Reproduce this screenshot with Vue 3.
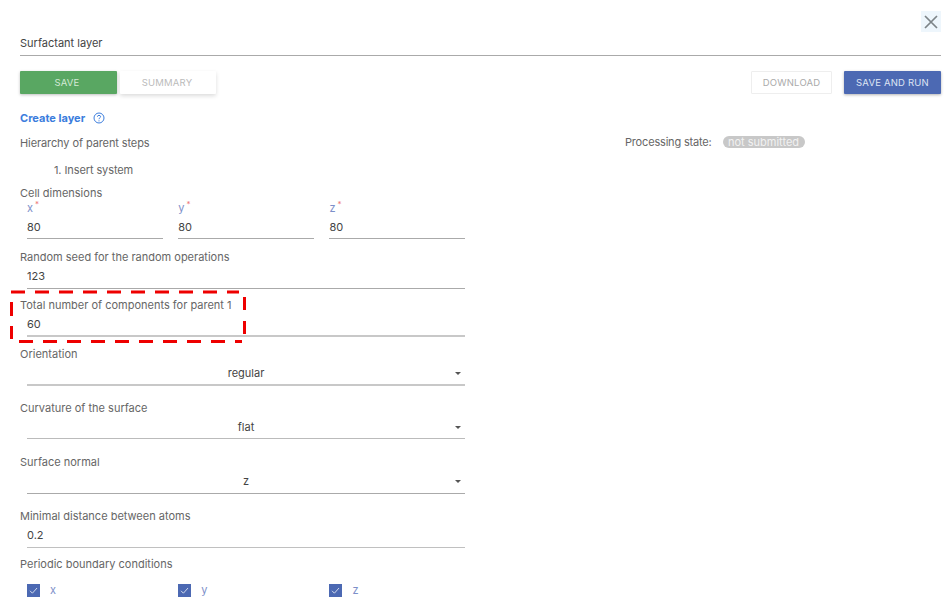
<script setup>
const cells = [{ k: 'x' }, { k: 'y' }, { k: 'z' }]
const fields = [
  { id: 'seed', label: 'Random seed for the random operations', value: '123' },
  { id: 'total', label: 'Total number of components for parent 1', value: '60', mark: true },
  { id: 'orient', label: 'Orientation', value: 'regular', select: true },
  { id: 'curv', label: 'Curvature of the surface', value: 'flat', select: true },
  { id: 'normal', label: 'Surface normal', value: 'z', select: true },
  { id: 'min', label: 'Minimal distance between atoms', value: '0.2' }
]
</script>

<template>
  <div class="page">
    <div class="close-row">
      <button class="close" aria-label="Close">
        <svg width="20" height="20" viewBox="0 0 20 20"><path d="M4 4 L16 16 M16 4 L4 16" stroke="#7d8488" stroke-width="1.7" fill="none"/></svg>
      </button>
    </div>
    <div class="title">Surfactant layer</div>
    <div class="toolbar">
      <div class="group">
        <button class="btn save">SAVE</button>
        <button class="btn summary">SUMMARY</button>
      </div>
      <div class="group right">
        <button class="btn download">DOWNLOAD</button>
        <button class="btn run">SAVE AND RUN</button>
      </div>
    </div>
    <div class="body">
      <div class="form">
        <div class="create">
          <span>Create layer</span>
          <svg width="12" height="12" viewBox="0 0 12 12"><circle cx="6" cy="6" r="5" fill="none" stroke="#3b7ddd" stroke-width="1"/><path d="M4.4 4.7 C4.4 2.9 7.6 2.9 7.6 4.7 C7.6 5.8 6 5.8 6 7.2" fill="none" stroke="#3b7ddd" stroke-width="1"/><circle cx="6" cy="8.8" r=".6" fill="#3b7ddd"/></svg>
        </div>
        <div class="label hierarchy">Hierarchy of parent steps</div>
        <div class="step">1. Insert system</div>
        <div class="label cell-label">Cell dimensions</div>
        <div class="cells">
          <div v-for="c in cells" :key="c.k" class="cell">
            <div class="cell-name">{{ c.k }}<sup>*</sup></div>
            <div class="input">80</div>
          </div>
        </div>
        <div v-for="f in fields" :key="f.id" class="field" :class="f.id">
          <div class="label">{{ f.label }}</div>
          <div class="input" :class="{ select: f.select }">
            {{ f.value }}
            <i v-if="f.select" class="caret"></i>
          </div>
          <svg v-if="f.mark" class="mark" width="240" height="56" viewBox="0 0 240 56">
            <path d="M1 2 H229" />
            <path d="M9 51.5 H232" />
            <path d="M1.5 12 V26 M1.5 36 V49" />
            <path d="M234.5 7 V20 M234.5 31 V44" />
          </svg>
        </div>
        <div class="label periodic">Periodic boundary conditions</div>
        <div class="checks">
          <div v-for="c in cells" :key="c.k" class="check">
            <span class="box">
              <svg width="13" height="13" viewBox="0 0 13 13"><path d="M3 6.8 L5.4 9.2 L10 4" fill="none" stroke="#dfe5f3" stroke-width=".9"/></svg>
            </span>
            <span class="check-name">{{ c.k }}</span>
          </div>
        </div>
      </div>
      <div class="state">
        <span class="state-label">Processing state:</span>
        <span class="pill">not submitted</span>
      </div>
    </div>
  </div>
</template>

<style>
html, body { margin: 0; background: #fff; overflow: hidden; }
</style>

<style scoped>
.page {
  width: 949px;
  height: 608px;
  box-sizing: border-box;
  padding: 11px 8px 0 20px;
  overflow: hidden;
  font-family: Inter, "Open Sans", sans-serif;
  font-size: 11px;
  color: #555;
  background: #fff;
}
.close-row { display: flex; justify-content: flex-end; height: 21px; }
.close {
  width: 20px; height: 21px; padding: 0; border: 0;
  background: #eef6fc;
  display: flex; align-items: center; justify-content: center;
}
.title {
  height: 23px;
  line-height: 22px;
  border-bottom: 1px solid #aaa;
  color: #444;
  font-size: 11px;
}
.toolbar {
  display: flex;
  justify-content: space-between;
  margin-top: 15px;
  height: 23px;
}
.group { display: flex; gap: 3px; }
.group.right { gap: 12px; }
.btn {
  height: 23px; padding: 0 0 1px; border: 0; border-radius: 1px;
  font: inherit;
  font-size: 9.5px;
  letter-spacing: .2px;
}
.save { width: 97px; background: #59a762; color: #d3e9d5; box-shadow: 0 1px 3px rgba(0,0,0,.25); padding-right: 3px; }
.summary { width: 96px; background: #fff; color: #bbb; box-shadow: 0 2px 4px rgba(0,0,0,.14); padding-right: 2px; }
.download { width: 81px; background: #fff; color: #aaa; border: 1px solid #eee; }
.run { width: 97px; background: #4c69b3; color: #dfe5f3; box-shadow: 0 1px 3px rgba(0,0,0,.3); }

.body { display: flex; }
.form { width: 445px; }
.create {
  display: flex; align-items: center; gap: 8px;
  margin-top: 17px; height: 14px;
  color: #3b7ddd;
  font-weight: 700;
  font-size: 11px;
}
.label { height: 14px; line-height: 14px; white-space: nowrap; color: #666; }
.hierarchy { margin-top: 11px; letter-spacing: -.1px; }
.step { margin: 13px 0 0 34px; height: 14px; line-height: 14px; color: #666; letter-spacing: -.1px; }
.cell-label { margin-top: 9px; }
.cells { display: flex; gap: 15.6px; margin-left: 7px; }
.cell { flex: 1; }
.cell-name { height: 14px; line-height: 16px; color: #7d8fc9; }
.cell-name sup { color: #e77; font-size: 8px; line-height: 0; margin-left: 2px; }
.input {
  position: relative;
  height: 24px;
  line-height: 24px;
  border-bottom: 1px solid #aaa;
  color: #444;
}
.cell .input { height: 23px; line-height: 25px; margin-top: 1px; }
.field { position: relative; }
.field .input { margin-left: 7px; }
.seed { margin-top: 11px; }
.total { margin-top: 9px; }
.orient { margin-top: 10px; }
.curv { margin-top: 15px; }
.normal { margin-top: 16px; }
.min { margin-top: 15px; }
.total .input { height: 23px; border-bottom: 2px solid #c8c8c8; }
.orient .input { height: 23px; line-height: 24px; border-bottom: 2px solid #c8c8c8; }
.curv .input { height: 23px; border-bottom-color: #bbb; }
.min .input { border-bottom-color: #c0c0c0; }
.select { text-align: center; }
.caret {
  position: absolute; right: 4px; top: 11px;
  border: 3px solid transparent; border-top-color: #555; border-bottom: 0;
}
.mark {
  position: absolute;
  left: -10px; top: -8px;
  pointer-events: none;
  overflow: visible;
}
.mark path {
  fill: none;
  stroke: #ee0000;
  stroke-width: 3;
  stroke-dasharray: 14 10;
}
.periodic { margin-top: 9px; }
.checks { display: flex; gap: 15.6px; margin: 12px 0 0 7px; }
.check { flex: 1; display: flex; align-items: center; gap: 10px; }
.box {
  width: 13px; height: 13px; background: #4c69b3;
  display: inline-flex;
}
.check-name { color: #7d8fc9; }
.state {
  margin: 41px 0 0 160px;
  height: 14px;
  display: flex; align-items: center; gap: 11px;
  white-space: nowrap;
  color: #666;
}
.state-label { letter-spacing: -.18px; }
.pill {
  background: #c8c8c8; color: #f2f2f2;
  border-radius: 7px;
  height: 12px; line-height: 12px;
  padding: 0 4px;
  width: 74px;
  text-align: center;
}
</style>
